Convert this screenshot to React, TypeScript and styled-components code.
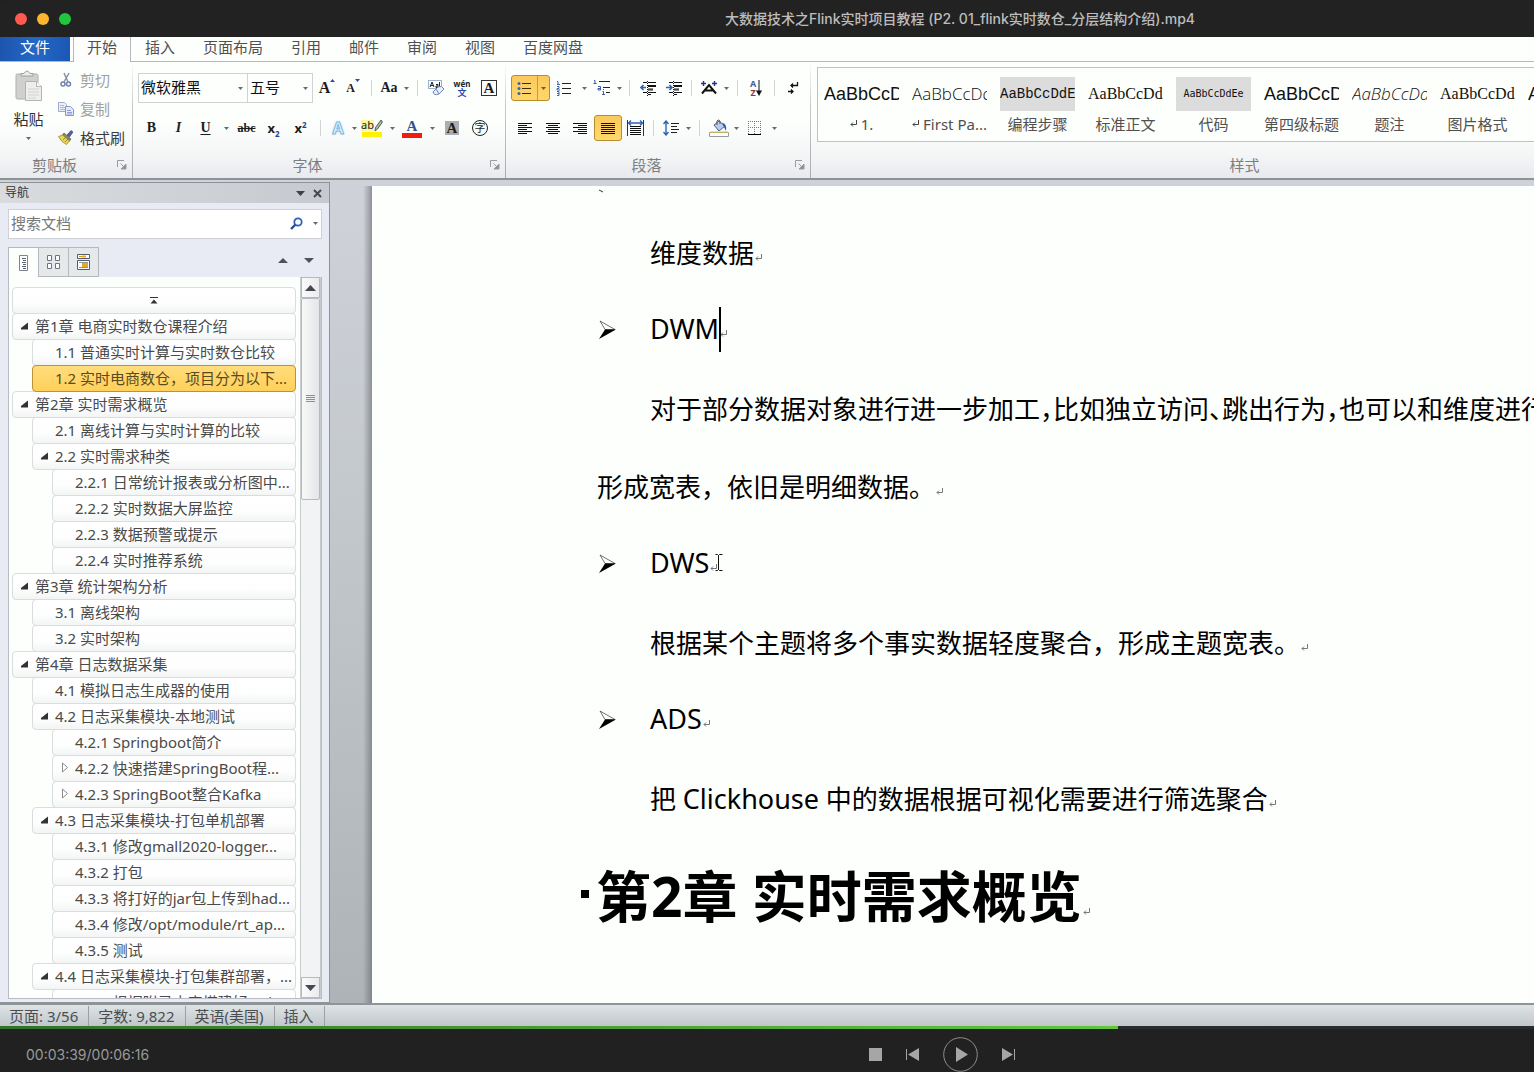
import React from "react";
import styled, { createGlobalStyle, css } from "styled-components";

const UI_FONT = '"Noto Sans", "Noto Sans CJK SC", sans-serif';
const SERIF = '"Liberation Serif", serif';

const GlobalStyle = createGlobalStyle`
  * { box-sizing: border-box; }
  body { margin: 0; background: #000; overflow: hidden; font-family: ${UI_FONT}; }
  button, input, select { font: inherit; color: inherit; margin: 0; padding: 0; border: 0; background: none; border-radius: 0; outline: none; }
  svg { display: block; flex: none; }
`;

const Player = styled.div`
  display: flex;
  flex-direction: column;
  height: 100vh;
  background: #212121;
  overflow: hidden;
`;

/* ---------- title bar ---------- */
const TitleBar = styled.header`
  display: flex;
  flex: none;
  align-items: center;
  height: 37px;
  background: #222;
  border-radius: 8px 0 0 0;
`;
const Lights = styled.div`
  display: flex;
  gap: 10px;
  width: 386px;
  padding-left: 15px;
`;
const Light = styled.button<{ $color: string }>`
  width: 12px;
  height: 12px;
  border-radius: 50%;
  background: ${(p) => p.$color};
`;
const Title = styled.h1`
  flex: 1;
  margin: 0;
  text-align: center;
  white-space: nowrap;
  font: 500 14px/20px Inter, "Noto Sans CJK SC", sans-serif;
  color: #bdbdbd;
`;

/* ---------- tabs ---------- */
const TabStrip = styled.nav`
  display: flex;
  flex: none;
  height: 25px;
  background: #fdfffd;
  border-bottom: 1px solid #b4b8bb;
`;
const FileTab = styled.button`
  width: 70px;
  height: 24px;
  margin-right: 3px;
  padding-bottom: 6px;
  background: linear-gradient(90deg, #1c55ae, #2468c6 50%, #1b57b4);
  color: #fff;
  font-size: 15px;
  line-height: 20px;
`;
const Tab = styled.button<{ $active?: boolean }>`
  height: 25px;
  padding: 0 14px 7px;
  font-size: 15px;
  line-height: 20px;
  color: #505050;
  ${(p) =>
    p.$active &&
    css`
      padding: 0 13px 7px;
      background: #fdfdfd;
      border: solid #b4b8bb;
      border-width: 0 1px;
    `}
`;

/* ---------- ribbon ---------- */
const Ribbon = styled.section`
  display: flex;
  flex: none;
  height: 118px;
  overflow: hidden;
  background: linear-gradient(#fdfffd 0 50%, #f6f8f8 75%, #e8eaee);
  border-bottom: 2px solid #8d9297;
`;
const Group = styled.div<{ $width?: number }>`
  display: flex;
  flex: none;
  flex-direction: column;
  width: ${(p) => (p.$width ? `${p.$width}px` : "auto")};
  border-right: 1px solid;
  border-image: linear-gradient(#fdfffd, #c4c8ca 40%, #a9adb0) 1;
`;
const GroupBody = styled.div`
  display: flex;
  flex: 1;
  flex-direction: column;
  gap: 12px;
  padding: 12px 0 0 5px;
`;
const GroupFoot = styled.footer`
  display: grid;
  grid-template-columns: 1fr auto;
  align-items: center;
  justify-items: center;
  height: 25px;
  padding-bottom: 2px;
  font-size: 15px;
  line-height: 20px;
  color: #7c7f82;
`;
const LauncherButton = styled.button`
  display: flex;
  align-items: center;
  width: 15px;
  height: 20px;
  margin-left: 8px;
`;
const ToolRow = styled.div`
  display: flex;
  align-items: center;
  height: 28px;
`;
const Tool = styled.button<{ $w?: number; $on?: boolean }>`
  display: flex;
  flex: none;
  align-items: center;
  justify-content: center;
  width: ${(p) => p.$w ?? 28}px;
  height: 26px;
  ${(p) =>
    p.$on &&
    css`
      border: 1px solid #b98d2c;
      border-radius: 3px;
      background: linear-gradient(#fbc95d, #ffd76b);
    `}
`;
const Divider = styled.span<{ $w?: number }>`
  flex: none;
  width: ${(p) => p.$w ?? 12}px;
  height: 16px;
  background: linear-gradient(#d2d5d6, #d2d5d6) center / 1px 100% no-repeat;
`;
const SplitButton = styled.div`
  display: flex;
  width: 39px;
  height: 26px;
  border: 1px solid #b98d2c;
  border-radius: 3px;
  background: linear-gradient(#fbc95d, #ffd76b);
  > button { height: 24px; }
  > button + button { border-left: 1px solid #c79a3a; }
`;
const Glyph = styled.span<{ $size?: number; $serif?: boolean; $bold?: boolean; $color?: string }>`
  font-family: ${(p) => (p.$serif ? SERIF : UI_FONT)};
  font-size: ${(p) => p.$size ?? 15}px;
  font-weight: ${(p) => (p.$bold ? 700 : 400)};
  line-height: 18px;
  color: ${(p) => p.$color ?? "#1c1c1c"};
  sub, sup { font-size: 8px; line-height: 0; color: #2b3f8f; }
`;
const Italic = styled(Glyph)`font-style: italic;`;
const Underline = styled(Glyph)`text-decoration: underline; text-underline-offset: 2px;`;
const Strike = styled(Glyph)`text-decoration: line-through;`;
const Boxed = styled(Glyph)<{ $fill?: boolean }>`
  width: ${(p) => (p.$fill ? 14 : 16)}px;
  height: ${(p) => (p.$fill ? 14 : 16)}px;
  line-height: 14px;
  text-align: center;
  border: ${(p) => (p.$fill ? "0" : "1px solid #333")};
  background: ${(p) => (p.$fill ? "#adadad" : "transparent")};
`;
const Circled = styled(Glyph)`
  width: 16px;
  height: 16px;
  border: 1px solid #222;
  border-radius: 50%;
  line-height: 13px;
  text-align: center;
`;
const Outlined = styled(Glyph)`
  color: #eaf6ff;
  -webkit-text-stroke: 1px #7db8de;
  text-shadow: 0 0 3px #9fd2f2;
`;
const Scaled = styled.span`
  display: flex;
  align-items: flex-start;
`;
const Stack = styled.span`
  display: flex;
  flex-direction: column;
  align-items: center;
`;
const TinyText = styled.span<{ $color: string; $bold?: boolean; $size?: number }>`
  font-size: ${(p) => p.$size ?? 9}px;
  line-height: 9px;
  font-weight: ${(p) => (p.$bold ? 700 : 400)};
  color: ${(p) => p.$color};
`;
const InkBar = styled.span<{ $color: string }>`
  width: 20px;
  height: 5px;
  background: ${(p) => p.$color};
`;
const InkLetter = styled(Glyph)`line-height: 14px;`;
const Marker = styled.span`
  display: flex;
  align-items: center;
  font-size: 11px;
  line-height: 14px;
  color: #222;
`;
const MarkerText = styled.span`
  height: 11px;
  line-height: 9px;
  background: #fff59a;
`;

const Combo = styled.label<{ $w: number }>`
  display: flex;
  align-items: center;
  width: ${(p) => p.$w}px;
  height: 30px;
  padding-right: 4px;
  border: 1px solid #cfd3d4;
  background: #fdfffd;
  & + & { border-left: 0; }
`;
const ComboSelect = styled.select`
  flex: 1;
  min-width: 0;
  padding: 0 0 2px 2px;
  appearance: none;
  font-size: 15px;
  line-height: 20px;
  color: #111;
`;

const ClipBody = styled.div`
  display: flex;
  flex: 1;
  padding-top: 3px;
`;
const PasteButton = styled.button`
  display: flex;
  flex-direction: column;
  align-items: center;
  width: 57px;
  padding-top: 5px;
  gap: 7px;
  font-size: 15px;
  line-height: 20px;
  color: #333;
`;
const PasteText = styled.span`
  display: flex;
  flex-direction: column;
  align-items: center;
  gap: 8px;
`;
const ClipList = styled.div`
  display: flex;
  flex-direction: column;
`;
const ClipItem = styled.button<{ $off?: boolean }>`
  display: flex;
  align-items: center;
  gap: 6px;
  height: 29px;
  padding-left: 1px;
  font-size: 15px;
  line-height: 20px;
  color: ${(p) => (p.$off ? "#9fa1a3" : "#3a3a3a")};
`;

const StylesBody = styled.div`
  flex: 1;
  padding: 5px 0 0 6px;
`;
const Gallery = styled.div`
  display: flex;
  width: 860px;
  height: 75px;
  padding: 9px 0 0 6px;
  border: 1px solid #bfc3c4;
  background: #fdfffd;
`;
const StyleCard = styled.button`
  display: flex;
  flex: none;
  flex-direction: column;
  align-items: flex-start;
  gap: 3px;
  width: 88px;
  height: 60px;
`;
const Sample = styled.span<{ $font: string; $size: number; $shade?: boolean; $italic?: boolean; $center?: boolean; $light?: boolean }>`
  width: 75px;
  height: 34px;
  overflow: hidden;
  white-space: nowrap;
  text-align: ${(p) => (p.$center ? "center" : "left")};
  font-family: ${(p) => p.$font}, sans-serif;
  font-size: ${(p) => p.$size}px;
  font-weight: ${(p) => (p.$light ? 300 : 400)};
  font-style: ${(p) => (p.$italic ? "italic" : "normal")};
  line-height: 34px;
  color: #111;
  background: ${(p) => (p.$shade ? "#dcdcdc" : "transparent")};
`;
const StyleName = styled.span`
  display: flex;
  align-items: center;
  justify-content: center;
  gap: 4px;
  width: 75px;
  font-size: 15px;
  line-height: 20px;
  white-space: nowrap;
  color: #505050;
`;

/* ---------- workspace ---------- */
const Workspace = styled.main`
  display: flex;
  flex: 1;
  min-height: 0;
  background: linear-gradient(#cfd2d9, #c3c8cc 40%, #adb3b6);
  border-bottom: 2px solid #8f9497;
`;
const Sidebar = styled.aside`
  display: flex;
  flex: none;
  flex-direction: column;
  width: 330px;
  margin-top: 2px;
  border: solid #8e9399;
  border-width: 1px 1px 1px 0;
  background: #e8ebf3;
`;
const SideHead = styled.div`
  display: flex;
  align-items: center;
  gap: 8px;
  height: 20px;
  padding: 0 7px 0 5px;
  background: linear-gradient(90deg, #d9dbde, #c6cad0);
`;
const SideTitle = styled.h2`
  flex: 1;
  margin: 0;
  font-size: 12px;
  font-weight: 400;
  line-height: 20px;
  color: #333;
`;
const SearchBox = styled.div`
  display: flex;
  align-items: center;
  gap: 10px;
  height: 30px;
  margin: 6px 7px 8px 8px;
  padding: 0 3px 2px 0;
  border: 1px solid #cdd0d6;
  background: #fff;
`;
const SearchInput = styled.input`
  flex: 1;
  min-width: 0;
  padding: 0 0 0 2px;
  font-size: 15px;
  line-height: 20px;
  &::placeholder { color: #77797b; opacity: 1; }
`;
const ViewTabs = styled.div`
  display: flex;
  align-items: center;
  height: 30px;
  margin-left: 8px;
  padding-right: 7px;
`;
const ViewTab = styled.button<{ $active?: boolean }>`
  display: flex;
  align-items: center;
  justify-content: center;
  width: ${(p) => (p.$active ? 31 : 30)}px;
  height: 30px;
  border: solid #b5b9bf;
  border-width: 1px 1px ${(p) => (p.$active ? 0 : 1)}px ${(p) => (p.$active ? 1 : 0)}px;
  background: ${(p) => (p.$active ? "#fdfffd" : "#e6e9ea")};
`;
const Spacer = styled.span`flex: 1;`;
const StepButton = styled.button`
  display: flex;
  align-items: center;
  justify-content: center;
  width: 26px;
  height: 30px;
  padding-bottom: 4px;
`;
const TreePanel = styled.div`
  display: flex;
  flex: 1;
  min-height: 0;
  margin: 0 7px 3px 8px;
  border: 1px solid #b9bdc3;
  border-top: 0;
  background: #fdfffd;
`;
const Tree = styled.ul`
  flex: 1;
  min-width: 0;
  margin: 0;
  padding: 10px 4px 0 3px;
  list-style: none;
  overflow: hidden;
`;
const TreeItem = styled.li<{ $level: number }>`
  height: 26px;
  padding-left: ${(p) => p.$level * 20}px;
`;
const TreeButton = styled.button<{ $active?: boolean; $center?: boolean }>`
  display: flex;
  align-items: center;
  justify-content: ${(p) => (p.$center ? "center" : "flex-start")};
  width: 100%;
  height: 27px;
  padding: ${(p) => (p.$center ? "0" : "0 0 2px 8px")};
  border: 1px solid #dadddd;
  border-radius: 4px;
  background: linear-gradient(#fff, #fdfefd 60%, #f3f5f5);
  font-size: 15px;
  line-height: 20px;
  color: #4a4a4a;
  white-space: nowrap;
  overflow: hidden;
  ${(p) =>
    p.$active &&
    css`
      position: relative;
      border-color: #bd9137;
      background: linear-gradient(#ffdc7c, #ffd15a);
      color: #5b4a1c;
    `}
`;
const Twisty = styled.span`
  display: flex;
  flex: none;
  width: 14px;
`;
const Scroll = styled.div`
  display: flex;
  flex: none;
  flex-direction: column;
  width: 21px;
  background: #f1f3f4;
  border: solid #c9cccf;
  border-width: 0 1px;
`;
const ScrollButton = styled.button`
  display: flex;
  flex: none;
  align-items: center;
  justify-content: center;
  height: 21px;
  border: 1px solid #b6babf;
  background: linear-gradient(90deg, #fbfbfb, #e9ebee);
`;
const Thumb = styled.div`
  display: flex;
  align-items: center;
  justify-content: center;
  height: 28%;
  border: 1px solid #b6babf;
  border-radius: 2px;
  background: linear-gradient(90deg, #f7f8f8, #e3e6e9);
`;

const Canvas = styled.div`
  flex: 1;
  min-width: 0;
  padding: 6px 0 0 42px;
  background: linear-gradient(90deg, transparent 33px, rgba(90, 95, 100, 0.55) 42px) 0 6px / 42px 100% no-repeat;
`;
const Page = styled.article`
  height: 100%;
  padding-left: 225px;
  overflow: hidden;
  background: #fdfffd;
  color: #000;
`;
const Line = styled.p<{ $indent?: boolean; $item?: boolean }>`
  display: flex;
  align-items: center;
  height: 78px;
  margin: 0;
  padding: 0 0 ${(p) => (p.$item ? 4 : 0)}px ${(p) => (p.$indent ? 53 : 0)}px;
  font-size: 26px;
  line-height: 78px;
  white-space: nowrap;
`;
const Term = styled.span`
  position: relative;
  font-size: 27px;
`;
const Remnant = styled.div`
  height: 28px;
  padding: 3px 0 0 1px;
`;
const BulletCell = styled.span`
  width: 53px;
  padding-left: 2px;
`;
const Half = styled.span`font-feature-settings: "halt";`;
const Chapter = styled.h2`
  display: flex;
  align-items: center;
  height: 120px;
  margin: 0 0 0 -16px;
  padding-bottom: 4px;
  font-size: 55px;
  font-weight: 700;
  line-height: 120px;
  white-space: nowrap;
`;
const Square = styled.span`
  width: 8px;
  height: 8px;
  margin: 0 7px 4px 0;
  background: #000;
`;
const MarkBox = styled.span<{ $deep?: boolean }>`
  padding: ${(p) => (p.$deep ? 32 : 10)}px 0 0 1px;
`;
const Caret = styled.span`
  position: absolute;
  top: 17px;
  right: -2px;
  width: 2px;
  height: 45px;
  background: #000;
`;
const Pointer = styled.span`
  position: absolute;
  top: 30px;
  left: 100%;
  margin-left: 6px;
`;

/* ---------- status bar and player ---------- */
const StatusBar = styled.footer`
  display: flex;
  flex: none;
  align-items: center;
  height: 21px;
  background: linear-gradient(#dfe3e5, #c0c7cb);
  font-size: 15px;
  line-height: 20px;
  color: #4b4e51;
`;
const StatusItem = styled.span`
  padding: 0 10px 0 9px;
  border-right: 1px solid #9ba0a4;
`;
const Progress = styled.progress`
  display: block;
  flex: none;
  width: 100%;
  height: 3px;
  appearance: none;
  border: 0;
  &::-webkit-progress-bar { background: #2b2b2d; }
  &::-webkit-progress-value { background: linear-gradient(90deg, #33702a, #62c73c); }
`;
const Transport = styled.div`
  display: flex;
  flex: none;
  align-items: center;
  height: 43px;
  padding-top: 8px;
`;
const Time = styled.time`
  width: 386px;
  padding-left: 26px;
  font: 400 14px/20px Inter, sans-serif;
  color: #9a9a9a;
`;
const Controls = styled.div`
  display: grid;
  flex: 1;
  grid-template-columns: 37px 37px 59px 37px 37px;
  justify-content: center;
  align-items: center;
`;
const Control = styled.button`
  display: flex;
  align-items: center;
  justify-content: center;
  height: 36px;
`;

/* ---------- drawings ---------- */
type Dir = "up" | "down";
const Arrow = ({ s = 5, dir = "down", c = "#6a6a6a" }: { s?: number; dir?: Dir; c?: string }) => (
  <svg width={s} height={Math.ceil(s / 2)} viewBox="0 0 10 5" preserveAspectRatio="none">
    <path d={dir === "down" ? "M0 0h10L5 5z" : "M0 5h10L5 0z"} fill={c} />
  </svg>
);
const Drop = ({ w = 8, label }: { w?: number; label: string }) => (
  <Tool $w={w} aria-label={label}><Arrow /></Tool>
);
const Launcher = () => (
  <svg width="10" height="10" viewBox="0 0 10 10" fill="none" stroke="#9a9da0">
    <path d="M0.500 7V0.500H7" /><path d="M3.500 3.500l4 4" /><path d="M9 4v5H4z" fill="#8b8f92" />
  </svg>
);
const Lines = ({ rows, w = 16 }: { rows: [number, number][]; w?: number }) => (
  <svg width={w} height="13" viewBox={`0 0 ${w} 13`} stroke="#111">
    {rows.map(([a, b], i) => <path key={i} d={`M${a} ${i * 2 + 1.5}H${b}`} />)}
  </svg>
);
const LEFT: [number, number][] = [[1, 15], [1, 10], [1, 15], [1, 10], [1, 15], [1, 10]];
const CENTER: [number, number][] = [[1, 15], [3, 13], [1, 15], [3, 13], [1, 15], [3, 13]];
const RIGHT: [number, number][] = [[1, 15], [6, 15], [1, 15], [6, 15], [1, 15], [6, 15]];
const FULL: [number, number][] = [[1, 15], [1, 15], [1, 15], [1, 15], [1, 15], [1, 15]];

const BulletsIcon = () => (
  <svg width="15" height="15" viewBox="0 0 15 15">
    <g fill="#3c64a8"><circle cx="2" cy="2.500" r="1.500" /><circle cx="2" cy="7.500" r="1.500" /><circle cx="2" cy="12.500" r="1.500" /></g>
    <path d="M5 2.500h9M5 7.500h9M5 12.500h9" stroke="#3c2c0c" />
  </svg>
);
const NumbersIcon = () => (
  <svg width="16" height="15" viewBox="0 0 16 15" fill="none">
    <path d="M1 0.500h1v3M1 3.500h3M1 5.500h2v2h-2v1.500h3M1 10.500h2v4H1M1 12.500h2" stroke="#3c64a8" />
    <path d="M6 2.500h9M6 7.500h9M6 12.500h9" stroke="#222" />
  </svg>
);
const MultiIcon = () => (
  <svg width="18" height="16" viewBox="0 0 18 16" fill="none">
    <path d="M1 0.500h1v3M0.500 3.500h3M5 6.500h2.500v3.500H5v-1.500h2M10.500 9v1M9.500 11.500h1v3M9 14.500h3" stroke="#3f57a0" />
    <path d="M6 1.500h11M10 7.500h7M13 12.500h4" stroke="#222" />
  </svg>
);
const IndentIcon = ({ flip }: { flip?: boolean }) => (
  <svg width="17" height="15" viewBox="0 0 17 15" fill="none">
    <path d="M3 1.500h4M8 1.500h8M8 4.500h8M8 5.500h8M8 8h5M8 9h5M3 11.500h4M8 11.500h8M8 13.500h3" stroke="#111" />
    <path d="M7.500 0v15" stroke="#111" strokeDasharray="1 1" />
    <path d={flip ? "M0 6.500h6M3.500 4L6 6.500 3.500 9" : "M6 6.500H1M3.500 4L1 6.500 3.500 9"} stroke="#2f62b5" strokeWidth="1.600" />
  </svg>
);
const AsianIcon = () => (
  <svg width="18" height="14" viewBox="0 0 18 14" fill="none">
    <path d="M2 12.500L9 4l7 8.500M5 9.500h8" stroke="#111" strokeWidth="2" />
    <path d="M1 2.500h5M3.500 0v5M12 2.500h5M14.500 0v5" stroke="#26308c" strokeWidth="1.400" />
  </svg>
);
const DownArrow = () => (
  <svg width="6" height="16" viewBox="0 0 6 16"><path d="M3 0v13" stroke="#111" /><path d="M0 10.500h6L3 16z" fill="#111" /></svg>
);
const MarksIcon = () => (
  <svg width="12" height="14" viewBox="0 0 12 14" fill="none" stroke="#111" strokeWidth="1.300">
    <path d="M10.500 1v3.500H4M6 2.500l-2 2 2 2M1 10.500h5M4 8.500l2 2-2 2" />
  </svg>
);
const DistributeIcon = () => (
  <svg width="17" height="16" viewBox="0 0 17 16" fill="none">
    <path d="M1 3h15M4 0.500L1.500 3 4 5.500M13 0.500L15.500 3 13 5.500" stroke="#2f62b5" strokeWidth="1.300" />
    <path d="M3 6.500h11M3 8.500h11M3 10.500h11M3 12.500h11M3 14.500h11" stroke="#111" />
    <path d="M0.500 0v16M16.500 0v16" stroke="#333" />
  </svg>
);
const SpacingIcon = () => (
  <svg width="16" height="16" viewBox="0 0 16 16" fill="none">
    <path d="M3 1v14M0.500 4L3 1l2.500 3M0.500 12L3 15l2.500-3" stroke="#2f62b5" strokeWidth="1.400" />
    <path d="M8 3.500h8M8 6.500h6M8 9.500h8M8 12.500h6" stroke="#222" />
  </svg>
);
const BucketIcon = () => (
  <svg width="20" height="18" viewBox="0 0 20 18" fill="none">
    <path d="M5 6l5-4 6 5-6 5z" fill="#b9cdea" stroke="#48658f" />
    <path d="M8 6V2q1-2 3 0v3" stroke="#555" />
    <path d="M13 4q5 0 4 8l-2-4z" fill="#2c5aa8" />
    <path d="M0.500 13.500h19v4H0.500z" fill="#fff" stroke="#9a9a9a" /><path d="M1 13h18" stroke="#d9cf3a" />
  </svg>
);
const BorderIcon = () => (
  <svg width="14" height="14" viewBox="0 0 14 14" fill="none">
    <path d="M0 0.500h13M0 6.500h13M0.500 0v13M6.500 0v13M12.500 0v13" stroke="#777" strokeDasharray="1 1" />
    <path d="M0 13.500h13" stroke="#000" />
  </svg>
);
const PasteIcon = () => (
  <svg width="28" height="32" viewBox="0 0 28 32">
    <rect x="1" y="4" width="22" height="25" rx="1.500" fill="#d0d0ce" stroke="#b0b0ae" />
    <path d="M6 6V3.500h3Q12-1.500 15 3.500h3V6z" fill="#ededeb" stroke="#9d9d9b" />
    <path d="M10.500 11.500h11l5 5v14h-16z" fill="#eeeeec" stroke="#b3b3b1" />
    <path d="M21.500 11.500v5h5" fill="#fff" stroke="#b3b3b1" />
    <path d="M13 19h11M13 22h11M13 25h11M13 28h8" stroke="#d2d2d0" />
  </svg>
);
const CutIcon = () => (
  <svg width="16" height="16" viewBox="0 0 16 16" fill="none">
    <path d="M6 1l4 9M11 1L6 10" stroke="#8a93a3" strokeWidth="1.500" />
    <circle cx="5" cy="12" r="2" stroke="#6f83ad" strokeWidth="1.500" /><circle cx="10.500" cy="12" r="2" stroke="#6f83ad" strokeWidth="1.500" />
  </svg>
);
const CopyIcon = () => (
  <svg width="16" height="14" viewBox="0 0 16 14">
    <path d="M0.500 0.500h6l2 2v7h-8z" fill="#eef1fa" stroke="#9daad0" /><path d="M2 3.500h4M2 5.500h5M2 7.500h5" stroke="#a9b5da" />
    <path d="M7.500 4.500h5l3 3v6h-8z" fill="#e4eafa" stroke="#8798c9" /><path d="M9 8.500h4M9 10.500h5M9 12h5" stroke="#8fa0d0" />
  </svg>
);
const BrushIcon = () => (
  <svg width="16" height="15" viewBox="0 0 16 15">
    <path d="M9 5l4-4.500 2 1.500-3.500 5z" fill="#4d63a5" stroke="#2d3a6a" strokeWidth="0.600" />
    <path d="M6 3l7 6-1.500 2-7-6z" fill="#8a8a5a" stroke="#4a4a30" strokeWidth="0.600" />
    <path d="M4.500 5l7 6-3 3.500Q3 12 0.500 6.500z" fill="#e6d95a" stroke="#8b7d25" strokeWidth="0.700" />
    <path d="M5 10l3-3M7 12l3-3" stroke="#9a8a2c" />
  </svg>
);
const EraserIcon = () => (
  <svg width="17" height="16" viewBox="0 0 17 16">
    <rect x="0.500" y="0.500" width="13" height="8" fill="#fff" stroke="#9bb0cf" />
    <path d="M2 7l2-5 2 5M3 5.500h2" stroke="#222" fill="none" /><path d="M8 4.500h2v3H8v-1.500h2M11.500 2v5.500" stroke="#222" fill="none" />
    <path d="M5 12l5-5q4-2 6 2l-5 5q-5 2-6-2z" fill="#e7eefa" stroke="#6d86b5" /><path d="M8 9l3 5" stroke="#6d86b5" />
  </svg>
);
const PenIcon = () => (
  <svg width="9" height="13" viewBox="0 0 9 13"><path d="M7 1l1.500 2-5 7-2.500 2 .5-3.500z" fill="#a7b9a0" stroke="#44534a" strokeWidth="0.900" /></svg>
);
const MagnifierIcon = () => (
  <svg width="13" height="13" viewBox="0 0 13 13" fill="none" stroke="#2e62b4"><circle cx="8" cy="5" r="3.700" strokeWidth="1.800" /><path d="M5.500 7.500L1 12" strokeWidth="2.400" stroke="#274f9a" /></svg>
);
const CloseIcon = () => (
  <svg width="9" height="9" viewBox="0 0 9 9"><path d="M1 1l7 7M8 1L1 8" stroke="#44484f" strokeWidth="2" /></svg>
);
const OutlineIcon = () => (
  <svg width="9" height="16" viewBox="0 0 9 16" fill="none"><path d="M0.500 0.500h8v15h-8z" stroke="#7d8490" /><path d="M3 3.500h4M4 5.500h3M3 7.500h4M4 9.500h3M3 11.500h4M4 13.500h3" stroke="#5e6572" /></svg>
);
const ThumbsIcon = () => (
  <svg width="13" height="15" viewBox="0 0 13 15" fill="#fff" stroke="#6b7290"><path d="M0.500 0.500h4v5h-4zM8.500 0.500h4v5h-4zM0.500 8.500h4v5h-4zM8.500 8.500h4v5h-4z" /></svg>
);
const ResultsIcon = () => (
  <svg width="13" height="16" viewBox="0 0 13 16">
    <path d="M0.500 0.500h12v4h-12zM0.500 6.500h12v9h-12z" fill="#fff" stroke="#555c68" />
    <path d="M2 2.500h3" stroke="#b9a030" /><path d="M5 2.500h4" stroke="#e8a91c" strokeWidth="2" /><path d="M5 11h6" stroke="#e8a91c" strokeWidth="4" /><path d="M2 8.500h9M2 13.500h9" stroke="#8d94a0" />
  </svg>
);
const TopIcon = () => (
  <svg width="8" height="7" viewBox="0 0 8 7"><path d="M0 0.500h8" stroke="#333" /><path d="M0.500 6.500h7L4 2.500z" fill="#333" /></svg>
);
const OpenTwisty = () => (
  <svg width="8" height="8" viewBox="0 0 8 8"><path d="M7 0.500v7h-7V6z" fill="#333" /></svg>
);
const ClosedTwisty = () => (
  <svg width="8" height="11" viewBox="0 0 8 11"><path d="M1.500 1v9L6.500 5.500z" fill="#fff" stroke="#8a8a8a" /></svg>
);
const Grip = () => (
  <svg width="9" height="8" viewBox="0 0 9 8" stroke="#8b8f94"><path d="M0 0.500h9M0 2.500h9M0 4.500h9M0 6.500h9" /></svg>
);
const ReturnMark = ({ c = "#777" }: { c?: string }) => (
  <svg width="7" height="8" viewBox="0 0 7 8" fill="none" stroke={c}><path d="M6.500 0v4.500H1M3 2.500l-2 2 2 2" /></svg>
);
const BulletArrow = () => (
  <svg width="17" height="19" viewBox="0 0 17 19"><path d="M1 1l15 8.500H6z" fill="#fff" stroke="#333" strokeWidth="0.700" /><path d="M0 19l6-9.500h11z" fill="#000" /></svg>
);
const IBeam = () => (
  <svg width="8" height="17" viewBox="0 0 8 17" fill="none" stroke="#111"><path d="M0.500 0.500h2l1 1 1-1h3M0.500 16.500h2l1-1 1 1h3M3.500 1v15" /></svg>
);

/* ---------- content ---------- */
const TABS = ["开始", "插入", "页面布局", "引用", "邮件", "审阅", "视图", "百度网盘"];

type Node = { level: number; text: string; open?: boolean; closed?: boolean; active?: boolean };
const OUTLINE: Node[] = [
  { level: 0, text: "第1章 电商实时数仓课程介绍", open: true },
  { level: 1, text: "1.1 普通实时计算与实时数仓比较" },
  { level: 1, text: "1.2 实时电商数仓，项目分为以下...", active: true },
  { level: 0, text: "第2章 实时需求概览", open: true },
  { level: 1, text: "2.1 离线计算与实时计算的比较" },
  { level: 1, text: "2.2 实时需求种类", open: true },
  { level: 2, text: "2.2.1 日常统计报表或分析图中..." },
  { level: 2, text: "2.2.2 实时数据大屏监控" },
  { level: 2, text: "2.2.3 数据预警或提示" },
  { level: 2, text: "2.2.4 实时推荐系统" },
  { level: 0, text: "第3章 统计架构分析", open: true },
  { level: 1, text: "3.1 离线架构" },
  { level: 1, text: "3.2 实时架构" },
  { level: 0, text: "第4章 日志数据采集", open: true },
  { level: 1, text: "4.1 模拟日志生成器的使用" },
  { level: 1, text: "4.2 日志采集模块-本地测试", open: true },
  { level: 2, text: "4.2.1 Springboot简介" },
  { level: 2, text: "4.2.2 快速搭建SpringBoot程...", closed: true },
  { level: 2, text: "4.2.3 SpringBoot整合Kafka", closed: true },
  { level: 1, text: "4.3 日志采集模块-打包单机部署", open: true },
  { level: 2, text: "4.3.1 修改gmall2020-logger..." },
  { level: 2, text: "4.3.2 打包" },
  { level: 2, text: "4.3.3 将打好的jar包上传到had..." },
  { level: 2, text: "4.3.4 修改/opt/module/rt_ap..." },
  { level: 2, text: "4.3.5 测试" },
  { level: 1, text: "4.4 日志采集模块-打包集群部署，...", open: true },
  { level: 2, text: "4.4.1 根据附录内容搭建好Ngi..." },
];

const SANS = '"Liberation Sans"';
const CARDS = [
  { name: "1.", mark: true, sample: "AaBbCcDd", font: SANS, size: 18 },
  { name: "First Pa...", mark: true, sample: "AaBbCcDd", font: '"Open Sans"', size: 17, light: true },
  { name: "编程步骤", sample: "AaBbCcDdEe", font: '"Liberation Mono"', size: 14, shade: true },
  { name: "标准正文", sample: "AaBbCcDdEe", font: '"Liberation Serif"', size: 16 },
  { name: "代码", sample: "AaBbCcDdEe", font: '"DejaVu Sans Mono"', size: 10, shade: true, center: true },
  { name: "第四级标题", sample: "AaBbCcDd", font: SANS, size: 18 },
  { name: "题注", sample: "AaBbCcDd", font: '"Open Sans"', size: 17, light: true, italic: true },
  { name: "图片格式", sample: "AaBbCcDdEe", font: '"Liberation Serif"', size: 16 },
  { name: "", sample: "AaBbCcDd", font: SANS, size: 18 },
];

const Foot = ({ children, launcher }: { children: React.ReactNode; launcher?: boolean }) => (
  <GroupFoot>
    <span>{children}</span>
    {launcher && <LauncherButton aria-label="更多选项"><Launcher /></LauncherButton>}
  </GroupFoot>
);

const ClipboardGroup = () => (
  <Group $width={133}>
    <ClipBody>
      <PasteButton>
        <PasteIcon />
        <PasteText>粘贴<Arrow /></PasteText>
      </PasteButton>
      <ClipList>
        <ClipItem $off><CutIcon />剪切</ClipItem>
        <ClipItem $off><CopyIcon />复制</ClipItem>
        <ClipItem><BrushIcon />格式刷</ClipItem>
      </ClipList>
    </ClipBody>
    <Foot launcher>剪贴板</Foot>
  </Group>
);

const FontGroup = () => (
  <Group $width={373}>
    <GroupBody>
      <ToolRow>
        <Combo $w={110}><ComboSelect aria-label="字体"><option>微软雅黑</option></ComboSelect><Arrow /></Combo>
        <Combo $w={65}><ComboSelect aria-label="字号"><option>五号</option></ComboSelect><Arrow /></Combo>
        <Tool><Scaled><Glyph $serif $bold $size={16}>A</Glyph><Arrow dir="up" c="#3949a0" /></Scaled></Tool>
        <Tool $w={24}><Scaled><Glyph $serif $bold $size={12}>A</Glyph><Arrow c="#3949a0" /></Scaled></Tool>
        <Divider />
        <Tool $w={24}><Glyph $serif $bold $size={14}>Aa</Glyph></Tool>
        <Drop w={10} label="更改大小写" />
        <Divider />
        <Tool $w={26} aria-label="清除格式"><EraserIcon /></Tool>
        <Tool $w={26}><Stack><TinyText $color="#222" $bold $size={8}>wén</TinyText><TinyText $color="#2f49b0" $bold>文</TinyText></Stack></Tool>
        <Tool><Boxed $serif $bold>A</Boxed></Tool>
      </ToolRow>
      <ToolRow>
        <Tool $w={27}><Glyph $serif $bold $size={14}>B</Glyph></Tool>
        <Tool $w={27}><Italic $serif $bold $size={14}>I</Italic></Tool>
        <Tool $w={27}><Underline $serif $bold $size={14}>U</Underline></Tool>
        <Drop w={14} label="下划线" />
        <Tool $w={27}><Strike $serif $bold $size={12}>abc</Strike></Tool>
        <Tool $w={27}><Glyph $bold $size={13}>x<sub>2</sub></Glyph></Tool>
        <Tool $w={27}><Glyph $bold $size={13}>x<sup>2</sup></Glyph></Tool>
        <Divider />
        <Tool $w={24}><Outlined $bold $size={16}>A</Outlined></Tool>
        <Drop label="文本效果" />
        <Tool><Stack><Marker><MarkerText>ab</MarkerText><PenIcon /></Marker><InkBar $color="#fff200" /></Stack></Tool>
        <Drop w={12} label="突出显示颜色" />
        <Tool><Stack><InkLetter $serif $bold $color="#35508f">A</InkLetter><InkBar $color="#f21b0c" /></Stack></Tool>
        <Drop w={12} label="字体颜色" />
        <Tool><Boxed $fill $serif $bold>A</Boxed></Tool>
        <Tool><Circled $size={11}>字</Circled></Tool>
      </ToolRow>
    </GroupBody>
    <Foot launcher>字体</Foot>
  </Group>
);

const ParagraphGroup = () => (
  <Group $width={305}>
    <GroupBody>
      <ToolRow>
        <SplitButton>
          <Tool $w={25} aria-label="项目符号"><BulletsIcon /></Tool>
          <Tool $w={12} aria-label="项目符号库"><Arrow c="#7d5c14" /></Tool>
        </SplitButton>
        <Tool aria-label="编号"><NumbersIcon /></Tool>
        <Drop w={12} label="编号库" />
        <Tool $w={24} aria-label="多级列表"><MultiIcon /></Tool>
        <Drop w={10} label="列表库" />
        <Divider $w={10} />
        <Tool aria-label="减少缩进量"><IndentIcon /></Tool>
        <Tool $w={24} aria-label="增加缩进量"><IndentIcon flip /></Tool>
        <Divider $w={10} />
        <Tool $w={26} aria-label="中文版式"><AsianIcon /></Tool>
        <Drop label="中文版式选项" />
        <Divider $w={14} />
        <Tool $w={24}><Stack><TinyText $color="#3c62a8" $bold>A</TinyText><TinyText $color="#93343c" $bold>Z</TinyText></Stack><DownArrow /></Tool>
        <Divider />
        <Tool $w={26} aria-label="显示编辑标记"><MarksIcon /></Tool>
      </ToolRow>
      <ToolRow>
        <Tool aria-label="左对齐"><Lines rows={LEFT} /></Tool>
        <Tool $w={27} aria-label="居中"><Lines rows={CENTER} /></Tool>
        <Tool aria-label="右对齐"><Lines rows={RIGHT} /></Tool>
        <Tool $on aria-label="两端对齐"><Lines rows={FULL} /></Tool>
        <Tool $w={26} aria-label="分散对齐"><DistributeIcon /></Tool>
        <Divider $w={10} />
        <Tool $w={26} aria-label="行距"><SpacingIcon /></Tool>
        <Drop label="行距选项" />
        <Divider $w={14} />
        <Tool $w={26} aria-label="底纹"><BucketIcon /></Tool>
        <Drop label="底纹颜色" />
        <Tool $w={30} aria-label="边框"><BorderIcon /></Tool>
        <Drop label="边框选项" />
      </ToolRow>
    </GroupBody>
    <Foot launcher>段落</Foot>
  </Group>
);

const StylesGroup = () => (
  <Group $width={868}>
    <StylesBody>
      <Gallery>
        {CARDS.map((c, i) => (
          <StyleCard key={i}>
            <Sample $font={c.font} $size={c.size} $shade={c.shade} $italic={c.italic} $center={c.center} $light={c.light}>{c.sample}</Sample>
            <StyleName>{c.mark && <ReturnMark c="#444" />}{c.name}</StyleName>
          </StyleCard>
        ))}
      </Gallery>
    </StylesBody>
    <Foot>样式</Foot>
  </Group>
);

const Navigation = () => (
  <Sidebar>
    <SideHead>
      <SideTitle>导航</SideTitle>
      <button aria-label="窗格选项"><Arrow s={9} c="#3c4048" /></button>
      <button aria-label="关闭"><CloseIcon /></button>
    </SideHead>
    <SearchBox>
      <SearchInput type="text" placeholder="搜索文档" aria-label="搜索文档" />
      <button aria-label="搜索"><MagnifierIcon /></button>
      <button aria-label="搜索选项"><Arrow /></button>
    </SearchBox>
    <ViewTabs>
      <ViewTab $active aria-label="标题"><OutlineIcon /></ViewTab>
      <ViewTab aria-label="页面"><ThumbsIcon /></ViewTab>
      <ViewTab aria-label="结果"><ResultsIcon /></ViewTab>
      <Spacer />
      <StepButton aria-label="上一标题"><Arrow s={10} dir="up" c="#4d525b" /></StepButton>
      <StepButton aria-label="下一标题"><Arrow s={10} c="#4d525b" /></StepButton>
    </ViewTabs>
    <TreePanel>
      <Tree>
        <TreeItem $level={0}><TreeButton $center aria-label="跳转到开头"><TopIcon /></TreeButton></TreeItem>
        {OUTLINE.map((n) => (
          <TreeItem key={n.text} $level={n.level}>
            <TreeButton $active={n.active}>
              <Twisty>{n.open && <OpenTwisty />}{n.closed && <ClosedTwisty />}</Twisty>
              {n.text}
            </TreeButton>
          </TreeItem>
        ))}
      </Tree>
      <Scroll>
        <ScrollButton aria-label="向上滚动"><Arrow s={11} dir="up" c="#444952" /></ScrollButton>
        <Thumb><Grip /></Thumb>
        <Spacer />
        <ScrollButton aria-label="向下滚动"><Arrow s={11} c="#444952" /></ScrollButton>
      </Scroll>
    </TreePanel>
  </Sidebar>
);

const Mark = ({ deep }: { deep?: boolean }) => <MarkBox $deep={deep}><ReturnMark /></MarkBox>;
const Bullet = () => <BulletCell><BulletArrow /></BulletCell>;

const Document = () => (
  <Canvas>
    <Page>
      <Remnant><svg width="8" height="4" viewBox="0 0 8 4"><path d="M1 1l4 2" stroke="#333" /></svg></Remnant>
      <Line $indent>维度数据<Mark /></Line>
      <Line $item><Bullet /><Term>DWM<Caret /></Term><Mark /></Line>
      <Line $indent>
        <span>对于部分数据对象进行进一步加工<Half>，</Half>比如独立访问<Half>、</Half>跳出行为<Half>，</Half>也可以和维度进行</span>
      </Line>
      <Line>形成宽表，依旧是明细数据。<Mark /></Line>
      <Line $item><Bullet /><Term>DWS<Pointer><IBeam /></Pointer></Term><Mark /></Line>
      <Line $indent>根据某个主题将多个事实数据轻度聚合，形成主题宽表。<Mark /></Line>
      <Line $item><Bullet /><Term>ADS</Term><Mark /></Line>
      <Line $indent><span>把 <Term>Clickhouse</Term> 中的数据根据可视化需要进行筛选聚合</span><Mark /></Line>
      <Chapter><Square />第2章 实时需求概览<Mark deep /></Chapter>
    </Page>
  </Canvas>
);

export default function App() {
  return (
    <Player>
      <GlobalStyle />
      <TitleBar>
        <Lights>
          <Light $color="#ff5a50" aria-label="关闭窗口" />
          <Light $color="#fdb52f" aria-label="最小化" />
          <Light $color="#1fc63f" aria-label="缩放" />
        </Lights>
        <Title>大数据技术之Flink实时项目教程 (P2. 01_flink实时数仓_分层结构介绍).mp4</Title>
      </TitleBar>
      <TabStrip>
        <FileTab>文件</FileTab>
        {TABS.map((t, i) => <Tab key={t} $active={i === 0}>{t}</Tab>)}
      </TabStrip>
      <Ribbon>
        <ClipboardGroup />
        <FontGroup />
        <ParagraphGroup />
        <StylesGroup />
      </Ribbon>
      <Workspace>
        <Navigation />
        <Document />
      </Workspace>
      <StatusBar>
        <StatusItem>页面: 3/56</StatusItem>
        <StatusItem>字数: 9,822</StatusItem>
        <StatusItem>英语(美国)</StatusItem>
        <StatusItem>插入</StatusItem>
      </StatusBar>
      <Progress value={0.729} max={1} aria-label="播放进度" />
      <Transport>
        <Time>00:03:39/00:06:16</Time>
        <Controls>
          <Control aria-label="停止"><svg width="13" height="13"><rect width="13" height="13" fill="#a6a6a6" /></svg></Control>
          <Control aria-label="上一个"><svg width="13" height="13" viewBox="0 0 13 13"><path d="M0.500 1v11" stroke="#a6a6a6" /><path d="M13 0v13L2 6.500z" fill="#a6a6a6" /></svg></Control>
          <Control aria-label="播放"><svg width="35" height="35" viewBox="0 0 35 35"><circle cx="17.500" cy="17.500" r="16.800" fill="none" stroke="#8e8e8e" /><path d="M13 10v15l12-7.500z" fill="#a6a6a6" /></svg></Control>
          <Control aria-label="下一个"><svg width="13" height="13" viewBox="0 0 13 13"><path d="M12.500 1v11" stroke="#a6a6a6" /><path d="M0 0v13l11-6.500z" fill="#a6a6a6" /></svg></Control>
        </Controls>
      </Transport>
    </Player>
  );
}
